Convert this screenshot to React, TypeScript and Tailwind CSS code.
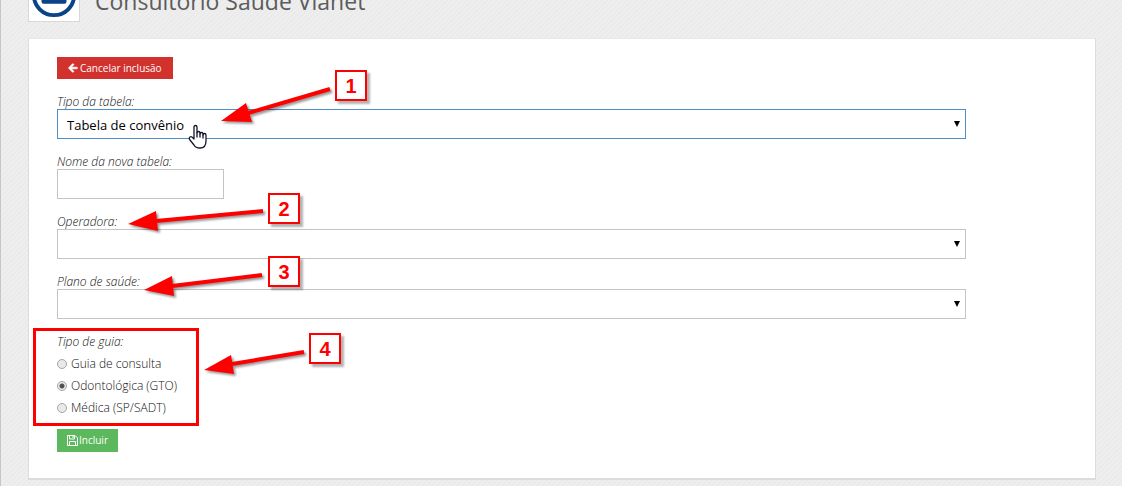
import { useState } from "react";
import type { ReactNode } from "react";
import { FaArrowLeft } from "react-icons/fa";

const fieldClass =
  "block h-[30px] appearance-none border bg-white pt-[3px] pl-[9px] pr-6 text-[13px] text-black outline-none";

function FloppyIcon() {
  return (
    <svg
      viewBox="0 0 11 11"
      className="size-[11px]"
      fill="none"
      stroke="currentColor"
      aria-hidden="true"
    >
      <path d="M.5 .5H8L10.500 3V10.500H.5Z" />
      <path d="M2.500 .5V4H7.500V.5M2.500 10.500V6.500H8.500V10.500" />
      <path d="M6 1V3" />
    </svg>
  );
}

interface FieldProps {
  id: string;
  label: string;
  children: ReactNode;
}

function Field({ id, label, children }: FieldProps) {
  return (
    <div>
      <label htmlFor={id} className="block text-[12px] leading-[14px] font-light italic">
        {label}
      </label>
      {children}
    </div>
  );
}

interface SelectProps {
  id: string;
  options: string[];
  active?: boolean;
}

function Select({ id, options, active = false }: SelectProps) {
  return (
    <div className="relative w-[90%]">
      <select
        id={id}
        className={`${fieldClass} w-full ${active ? "border-[#4f8fc9]" : "border-[#c4c4c4]"}`}
      >
        {options.map((option) => (
          <option key={option}>{option}</option>
        ))}
      </select>
      <svg
        viewBox="0 0 6 6"
        className="pointer-events-none absolute top-3 right-[6px] size-[6px]"
        aria-hidden="true"
      >
        <path d="M0 0H6L3 6Z" />
      </svg>
    </div>
  );
}

const guides = ["Guia de consulta", "Odontológica (GTO)", "Médica (SP/SADT)"];

function GuideOptions() {
  const [guide, setGuide] = useState(guides[1]);

  return (
    <fieldset>
      <legend className="text-[12px] leading-[14px] font-light italic">Tipo de guia:</legend>
      <div className="pt-[3px]">
        {guides.map((name) => (
          <label key={name} className="flex h-[22px] items-center gap-1 pt-px text-[12px] font-light">
            <input
              type="radio"
              name="guide"
              checked={guide === name}
              onChange={() => setGuide(name)}
              className="size-[10px] appearance-none rounded-full border border-[#a5a5a5] bg-[#e9e9e9] checked:bg-[radial-gradient(circle,#505050_0_2px,#e9e9e9_3px)]"
            />
            {name}
          </label>
        ))}
      </div>
    </fieldset>
  );
}

// Numbered callouts drawn over the form
const callouts = [
  { number: 1, place: "left-[335px] top-[70px]" },
  { number: 2, place: "left-[268px] top-[193px]" },
  { number: 3, place: "left-[268px] top-[256px]" },
  { number: 4, place: "left-[309px] top-[333px]" },
];

const arrows = [
  { head: "221,121 246,103 252,122", shaft: "M248 113L330 89" },
  { head: "128,224 156,211 158,231", shaft: "M156 221L263 211" },
  { head: "144,290 172,276 174,296", shaft: "M172 286L262 275" },
  { head: "204,370 231,355 234,374", shaft: "M232 364L304 352" },
];

function Annotations() {
  return (
    <div className="pointer-events-none absolute inset-y-0 right-0 -left-px">
      <div className="absolute top-[328px] left-[33px] h-[98px] w-[166px] border-3 border-[#ff0000]" />
      <svg
        width="400"
        height="400"
        className="absolute top-0 left-0 drop-shadow-[2px_2px_1px_rgba(0,0,0,0.4)]"
        aria-hidden="true"
      >
        {arrows.map((arrow) => (
          <g key={arrow.head} fill="#ff0000" stroke="#ff0000">
            <path d={arrow.shaft} strokeWidth="4" />
            <polygon points={arrow.head} stroke="none" />
          </g>
        ))}
      </svg>
      {callouts.map((callout) => (
        <div
          key={callout.number}
          className={`absolute flex h-[31px] w-8 items-center justify-center border-2 border-[#ff0000] bg-white font-['Liberation_Sans',sans-serif] text-[20px] font-bold text-[#ff0000] shadow-[3px_3px_2px_rgba(0,0,0,0.3)] ${callout.place}`}
        >
          {callout.number}
        </div>
      ))}
      <svg
        viewBox="0 0 19 25"
        className="absolute top-[124px] left-[188px] h-[25px] w-[19px]"
        fill="#fff"
        stroke="#15152a"
        strokeWidth="1.3"
        strokeLinejoin="round"
        strokeLinecap="round"
        aria-hidden="true"
      >
        <path d="M6 15V3Q6 1.500 7.500 1.500T9 3V9Q9 7.500 10.500 7.500T12 9V10Q12 8.500 13.500 8.500T15 10V11Q15 9.500 16.500 9.500T18 11V17C18 22 15 24 12 24C9 24 7 23 6 21L2 16Q.5 14 2 13T5 14L6 15" />
        <path d="M9 9V13M12 10V13M15 11V14" />
      </svg>
    </div>
  );
}

export default function App() {
  return (
    <div className="relative min-h-screen border-l border-[#c6c6c6] bg-[#ebebeb] bg-[linear-gradient(135deg,#ebebeb_40%,#f2f2f2_40%_50%,#ebebeb_50%_90%,#f2f2f2_90%)] bg-size-[5px_5px] pr-[26px] pl-[27px] font-['Open_Sans','Noto_Sans',sans-serif] text-[#111]">
      <header className="flex h-[38px] items-end gap-[15px] overflow-hidden pb-4">
        <div className="w-[52px] shrink-0 border border-[#d8d8d8] bg-white p-px">
          <svg viewBox="0 0 50 50" className="block" role="img" aria-label="Logo">
            <circle cx="25" cy="24" r="21" fill="none" stroke="#0b4388" strokeWidth="4" />
            <rect x="12" y="18" width="26" height="15" rx="2" fill="#0b4388" />
          </svg>
        </div>
        <h1 className="pb-[7px] text-[23px] leading-7 whitespace-nowrap text-[#5c5c5c]">
          Consultório Saúde Vianet
        </h1>
      </header>

      <main className="border border-t-[#e8e8e8] border-b-2 border-[#dcdcdc] bg-white px-7 pt-[18px] pb-[26px]">
        <form onSubmit={(event) => event.preventDefault()}>
          <button
            type="button"
            className="flex h-[22px] items-center gap-[2px] bg-[#d2322d] px-[11px] text-[10px] text-white"
          >
            <FaArrowLeft className="size-[10px]" strokeWidth={40} />
            Cancelar inclusão
          </button>

          <div className="mt-4 flex flex-col gap-4">
            <Field id="type" label="Tipo da tabela:">
              <Select id="type" options={["Tabela de convênio", "Tabela particular"]} active />
            </Field>
            <Field id="name" label="Nome da nova tabela:">
              <input id="name" type="text" className={`${fieldClass} w-[167px] border-[#c4c4c4]`} />
            </Field>
            <Field id="operator" label="Operadora:">
              <Select id="operator" options={[""]} />
            </Field>
            <Field id="plan" label="Plano de saúde:">
              <Select id="plan" options={[""]} />
            </Field>
            <GuideOptions />
          </div>

          <button
            type="submit"
            className="mt-[11px] flex h-[23px] items-center gap-px bg-[#5cb85c] px-[10px] text-[10px] text-white"
          >
            <FloppyIcon />
            Incluir
          </button>
        </form>
      </main>

      <Annotations />
    </div>
  );
}
